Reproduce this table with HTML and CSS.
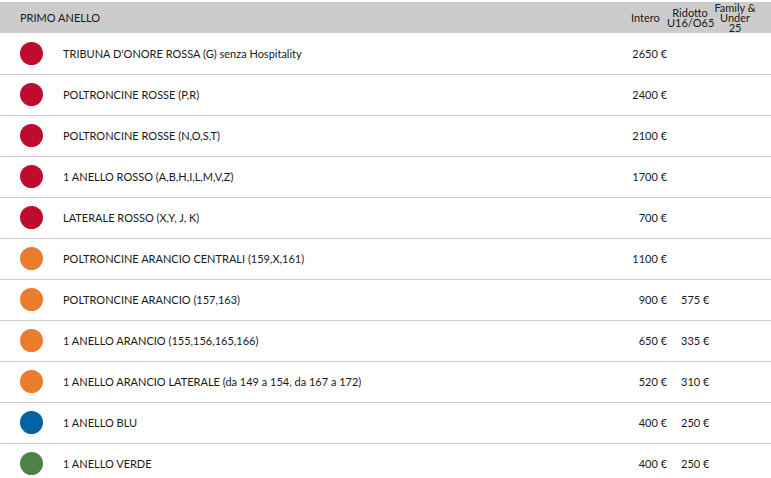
FILE: index.html
```html
<!DOCTYPE html>
<html lang="it">
<head>
<meta charset="utf-8">
<title>Primo Anello</title>
<link rel="stylesheet" href="styles.css">
</head>
<body>
<div class="wrap">
<table class="prices">
  <colgroup>
    <col class="c-dot">
    <col class="c-name">
    <col class="c-int">
    <col class="c-rid">
    <col class="c-fam">
  </colgroup>
  <thead>
    <tr>
      <th class="h-title" colspan="2">PRIMO ANELLO</th>
      <th class="h-col h-int">Intero</th>
      <th class="h-col">Ridotto U16/O65</th>
      <th class="h-col h-fam">Family &amp; Under 25</th>
    </tr>
  </thead>
  <tbody>
    <tr><td class="dot-cell"><span class="dot red"></span></td><td class="name">TRIBUNA D'ONORE ROSSA (G) senza Hospitality</td><td class="int">2650 €</td><td class="rid"></td><td></td></tr>
    <tr><td class="dot-cell"><span class="dot red"></span></td><td class="name">POLTRONCINE ROSSE (P,R)</td><td class="int">2400 €</td><td class="rid"></td><td></td></tr>
    <tr><td class="dot-cell"><span class="dot red"></span></td><td class="name">POLTRONCINE ROSSE (N,O,S,T)</td><td class="int">2100 €</td><td class="rid"></td><td></td></tr>
    <tr><td class="dot-cell"><span class="dot red"></span></td><td class="name">1 ANELLO ROSSO (A,B,H,I,L,M,V,Z)</td><td class="int">1700 €</td><td class="rid"></td><td></td></tr>
    <tr><td class="dot-cell"><span class="dot red"></span></td><td class="name">LATERALE ROSSO (X,Y, J, K)</td><td class="int">700 €</td><td class="rid"></td><td></td></tr>
    <tr><td class="dot-cell"><span class="dot orange"></span></td><td class="name">POLTRONCINE ARANCIO CENTRALI (159,X,161)</td><td class="int">1100 €</td><td class="rid"></td><td></td></tr>
    <tr><td class="dot-cell"><span class="dot orange"></span></td><td class="name">POLTRONCINE ARANCIO (157,163)</td><td class="int">900 €</td><td class="rid">575 €</td><td></td></tr>
    <tr><td class="dot-cell"><span class="dot orange"></span></td><td class="name">1 ANELLO ARANCIO (155,156,165,166)</td><td class="int">650 €</td><td class="rid">335 €</td><td></td></tr>
    <tr><td class="dot-cell"><span class="dot orange"></span></td><td class="name">1 ANELLO ARANCIO LATERALE (da 149 a 154, da 167 a 172)</td><td class="int">520 €</td><td class="rid">310 €</td><td></td></tr>
    <tr><td class="dot-cell"><span class="dot blue"></span></td><td class="name">1 ANELLO BLU</td><td class="int">400 €</td><td class="rid">250 €</td><td></td></tr>
    <tr><td class="dot-cell"><span class="dot green"></span></td><td class="name">1 ANELLO VERDE</td><td class="int">400 €</td><td class="rid">250 €</td><td></td></tr>
  </tbody>
</table>
</div>
</body>
</html>
```

FILE: styles.css
```css
html, body {
  margin: 0;
  padding: 0;
  background: #ffffff;
}
.wrap {
  padding-top: 2px;
  font-family: Lato, "Open Sans", sans-serif;
  color: #1a1a1a;
  font-size: 11px;
}
.prices {
  width: 771px;
  border-collapse: collapse;
  table-layout: fixed;
}
.c-dot { width: 63px; }
.c-name { width: 564px; }
.c-int { width: 40px; }
.c-rid { width: 46px; }
.c-fam { width: 58px; }

thead tr {
  background: #cccccc;
  height: 31px;
}
th {
  font-weight: normal;
  padding: 0;
  vertical-align: middle;
}
.h-title {
  text-align: left;
  padding-left: 20px;
}
.h-col {
  text-align: center;
  line-height: 10px;
}
.h-int { text-align: left; padding-left: 4px; }
.h-fam { padding-right: 14px; }

tbody tr {
  height: 41px;
  border-bottom: 1px solid #cccccc;
}
td {
  padding: 0;
  vertical-align: middle;
  white-space: nowrap;
}
.dot-cell { padding-left: 20px; }
.dot {
  display: block;
  width: 23px;
  height: 23px;
  border-radius: 50%;
}
.red { background: #be0c2c; }
.orange { background: #eb7c2d; }
.blue { background: #0063a2; }
.green { background: #4c8245; }
.int { text-align: right; }
.rid { padding-left: 14px; }
```
